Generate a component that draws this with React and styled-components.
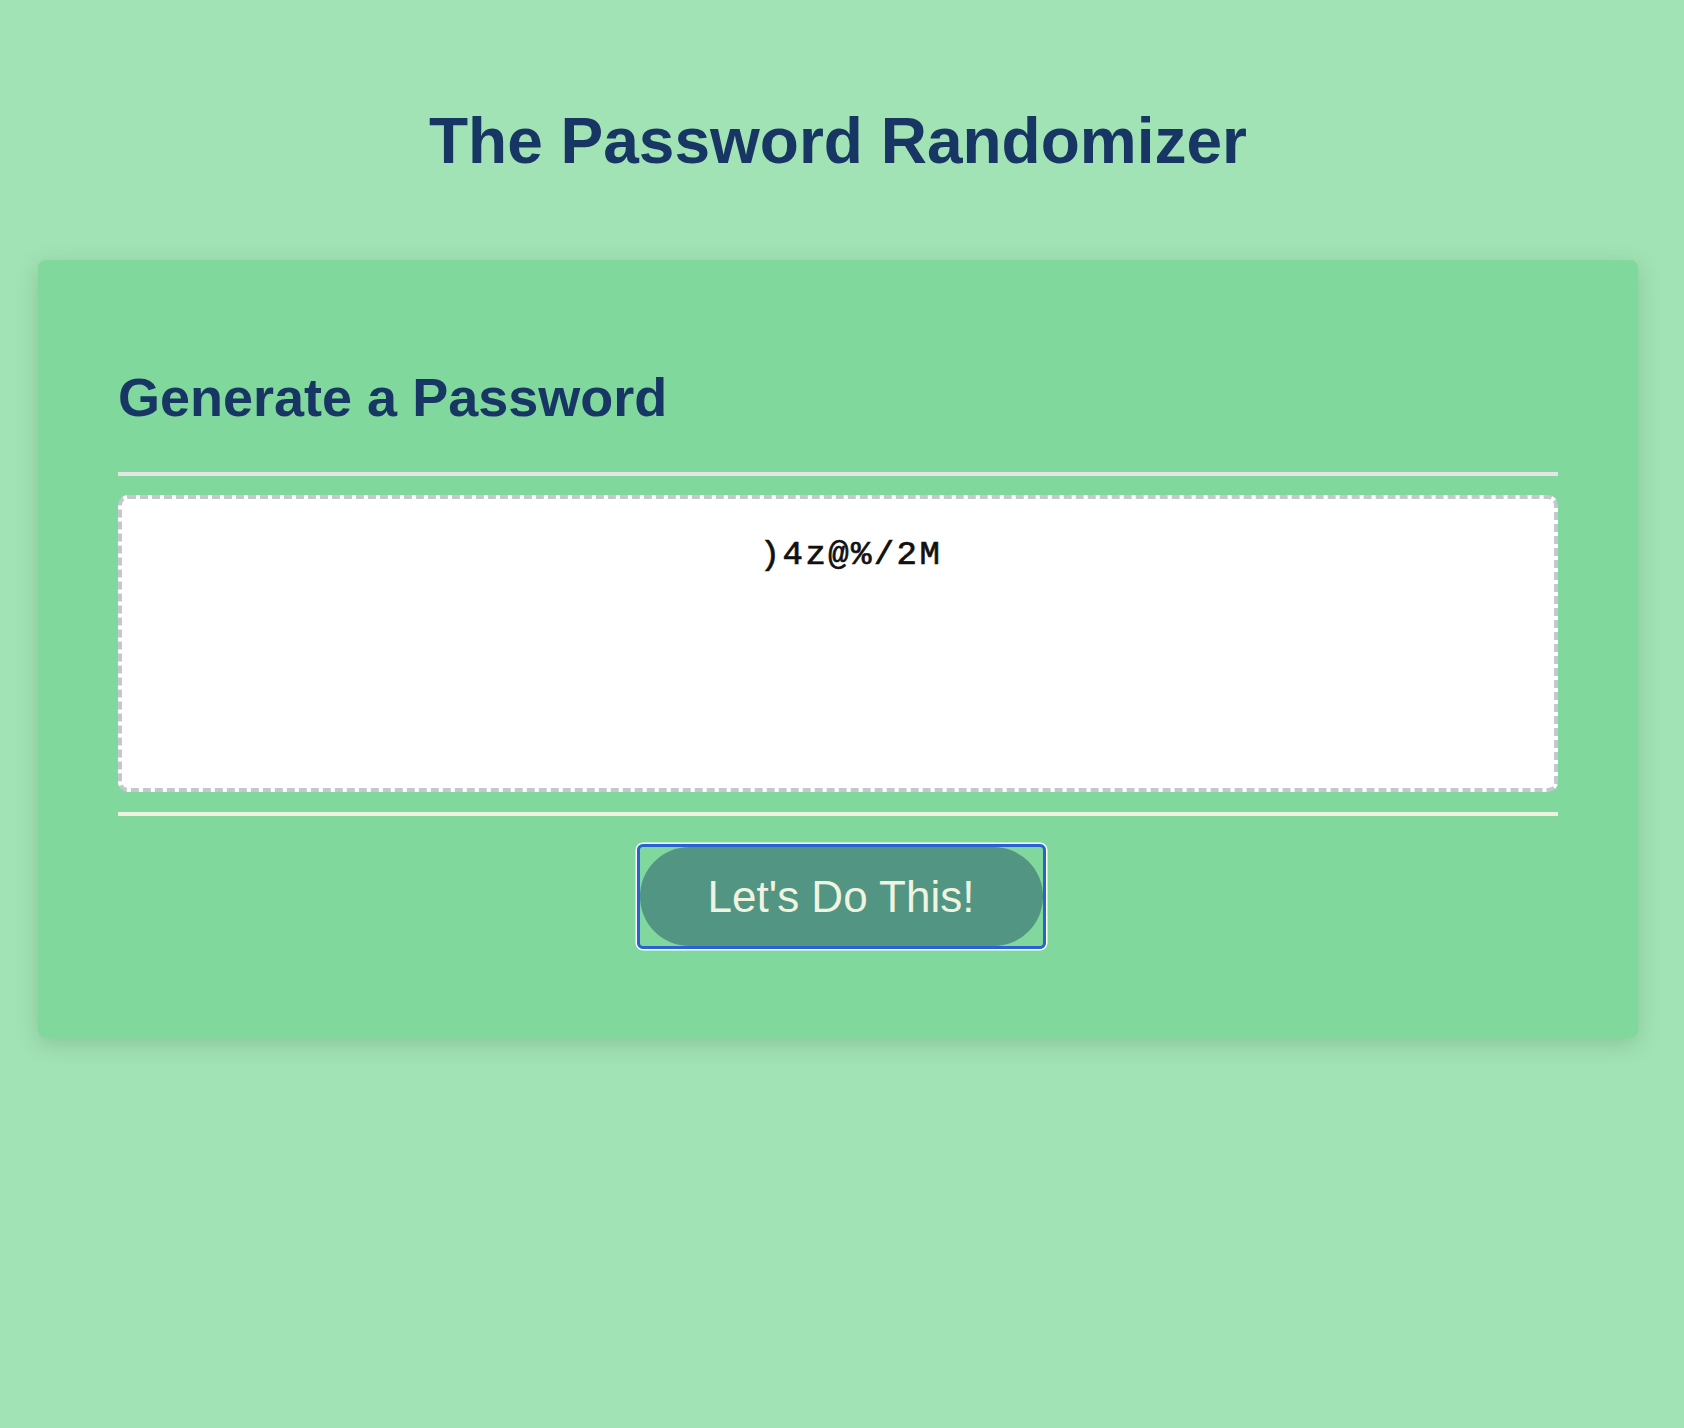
import React from "react";
import styled, { createGlobalStyle } from "styled-components";

const GlobalStyle = createGlobalStyle`
  html, body {
    margin: 0;
    padding: 0;
    background: #a2e3b5;
    font-family: "Liberation Sans", Arial, Helvetica, sans-serif;
  }
  * { box-sizing: border-box; }
`;

const Page = styled.div`
  min-height: 1428px;
  padding: 104px 46px 0 38px;
  display: flex;
  flex-direction: column;
  align-items: center;
`;

const Title = styled.h1`
  margin: 0 0 82px;
  font-size: 64px;
  line-height: 74px;
  font-weight: 700;
  color: #183664;
  text-align: center;
`;

const Card = styled.section`
  width: 100%;
  background: #80d89c;
  border-radius: 8px;
  box-shadow: 0 6px 22px rgba(40, 90, 60, 0.22);
  padding: 106px 80px 89px;
  display: flex;
  flex-direction: column;
`;

const Heading = styled.h2`
  margin: 0 0 44px;
  font-size: 54px;
  line-height: 62px;
  font-weight: 700;
  color: #183664;
`;

const Divider = styled.div`
  height: 4px;
  background: ${(p) => p.$color};
  margin: ${(p) => p.$margin};
`;

const Output = styled.textarea`
  display: block;
  width: 100%;
  height: 297px;
  resize: none;
  border: 4px dashed #c3c8cf;
  border-radius: 10px;
  background: #ffffff;
  padding: 37px 20px 37px 46px;
  font-family: "Liberation Mono", "Courier New", monospace;
  font-size: 34px;
  font-weight: 400;
  -webkit-text-stroke: 0.7px #111111;
  line-height: 38px;
  letter-spacing: 2.4px;
  color: #111111;
  text-align: center;
  outline: none;
`;

const ButtonRow = styled.div`
  display: flex;
  justify-content: center;
  padding-left: 6px;
`;

const FocusRing = styled.div`
  display: inline-flex;
  border: 3px solid #2a62d4;
  border-radius: 6px;
  box-shadow: 0 0 0 1.5px #ffffff;
`;

const GenerateButton = styled.button`
  width: 403px;
  height: 99px;
  border: none;
  border-radius: 50px;
  background: #529583;
  color: #eef4e0;
  font-family: "Liberation Sans", Arial, Helvetica, sans-serif;
  font-size: 44px;
  display: flex;
  align-items: center;
  justify-content: center;
  cursor: pointer;
  outline: none;
  padding: 0;
`;

export default function App() {
  return (
    <>
      <GlobalStyle />
      <Page>
        <Title>The Password Randomizer</Title>
        <Card>
          <Heading>Generate a Password</Heading>
          <Divider $color="#e5e6e3" $margin="0 0 19px" />
          <Output readOnly value=")4z@%/2M" aria-label="Generated Password" />
          <Divider $color="#eef3e0" $margin="20px 0 28px" />
          <ButtonRow>
            <FocusRing>
              <GenerateButton type="button">Let's Do This!</GenerateButton>
            </FocusRing>
          </ButtonRow>
        </Card>
      </Page>
    </>
  );
}
